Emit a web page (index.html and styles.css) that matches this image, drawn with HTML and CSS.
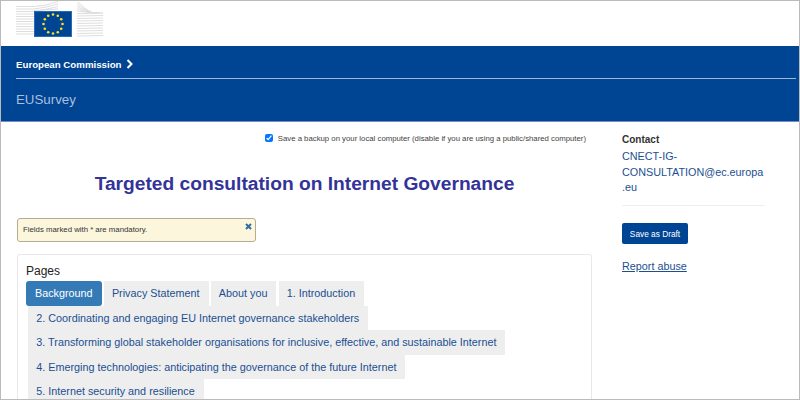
FILE: index.html
```html
<!DOCTYPE html>
<html lang="en">
<head>
    <meta charset="UTF-8">
    <title>EUSurvey</title>
    <link rel="stylesheet" href="styles.css">
</head>
<body>
    <div class="page">
        <div class="logo-bar">
            <svg class="logo" width="87" height="36" viewBox="0 0 87 36">
                <g stroke="#dedede" stroke-width="1" fill="none">
                    <path d="M0 5.500 L18 5.500 Q30 5 42 0.500"/>
                    <path d="M0 8 L18 8 Q30 6.500 42 3"/>
                    <path d="M0 10.500 L18 10.500 Q30 8.500 42 5.500"/>
                    <path d="M18 9.500 L42 8"/>
                    <path d="M0 13 H18"/>
                    <path d="M0 15.500 H18"/>
                    <path d="M0 18 H18"/>
                    <path d="M0 20.500 H18"/>
                    <path d="M0 23 H18"/>
                    <path d="M0 25.500 H18"/>
                    <path d="M0 28 H18"/>
                    <path d="M0 30.500 H18"/>
                    <path d="M0 33 H18"/>
                    <path d="M61 35 L87 34.500"/>
                    <path d="M61 32.500 L87 32"/>
                    <path d="M61 30 L87 29.500"/>
                    <path d="M61 27.500 L87 27"/>
                    <path d="M61 25 L87 24.500"/>
                    <path d="M61 22.500 L87 22"/>
                    <path d="M61 20 L87 19.500"/>
                    <path d="M61 17.500 L87 17"/>
                    <path d="M61 15 L87 14.500"/>
                    <path d="M61 12.500 Q75 13 87 12"/>
                    <path d="M61 10 Q72 12 87 12"/>
                    <path d="M61 7.500 Q70 12 84 12"/>
                    <path d="M61 5 Q68 11 81 12"/>
                    <path d="M61 2.500 Q67 9 78 12"/>
                    <path d="M62 1 Q67 7 75 11"/>
                </g>
                <rect x="18.500" y="10.500" width="37" height="25" fill="#004494" stroke="#2a6ab5"/>
                <g fill="#ffe21a">
                    <circle cx="37" cy="13.500" r="1.300"/>
                    <circle cx="41.800" cy="14.800" r="1.300"/>
                    <circle cx="45.200" cy="18.300" r="1.300"/>
                    <circle cx="46.500" cy="23" r="1.300"/>
                    <circle cx="45.200" cy="27.700" r="1.300"/>
                    <circle cx="41.800" cy="31.200" r="1.300"/>
                    <circle cx="37" cy="32.500" r="1.300"/>
                    <circle cx="32.200" cy="31.200" r="1.300"/>
                    <circle cx="28.800" cy="27.700" r="1.300"/>
                    <circle cx="27.500" cy="23" r="1.300"/>
                    <circle cx="28.800" cy="18.300" r="1.300"/>
                    <circle cx="32.200" cy="14.800" r="1.300"/>
                </g>
            </svg>
        </div>

        <div class="site-header">
            <div class="breadcrumb">
                European Commission
                <svg width="7" height="10" viewBox="0 0 7 10"><path d="M1.500 1 L5.500 5 L1.500 9" fill="none" stroke="#fff" stroke-width="2"/></svg>
            </div>
            <div class="site-name">EUSurvey</div>
        </div>

        <div class="content">
            <div class="main">
                <label class="backup"><input type="checkbox" checked> Save a backup on your local computer (disable if you are using a public/shared computer)</label>
                <h1 class="title">Targeted consultation on Internet Governance</h1>
                <div class="notice">
                    Fields marked with * are mandatory.
                    <svg class="notice-close" width="7" height="7" viewBox="0 0 7 7"><path d="M1 1 L6 6 M6 1 L1 6" fill="none" stroke="#2f6ea5" stroke-width="2"/></svg>
                </div>
                <div class="pages-box">
                    <div class="pages-label">Pages</div>
                    <div class="tabs">
                        <a class="tab active">Background</a>
                        <a class="tab">Privacy Statement</a>
                        <a class="tab">About you</a>
                        <a class="tab">1. Introduction</a>
                        <a class="tab">2. Coordinating and engaging EU Internet governance stakeholders</a>
                        <a class="tab">3. Transforming global stakeholder organisations for inclusive, effective, and sustainable Internet</a>
                        <a class="tab">4. Emerging technologies: anticipating the governance of the future Internet</a>
                        <a class="tab">5. Internet security and resilience</a>
                    </div>
                </div>
            </div>
            <div class="side">
                <div class="side-title">Contact</div>
                <a class="contact-mail">CNECT-IG-CONSULTATION@ec.europa.eu</a>
                <div class="side-rule"></div>
                <button class="draft-btn">Save as Draft</button>
                <a class="report">Report abuse</a>
            </div>
        </div>
    </div>
</body>
</html>
```

FILE: styles.css
```css
html, body {
    margin: 0;
    height: 100%;
}
body {
    font-family: "Liberation Sans", Arial, sans-serif;
    background: #fff;
    overflow: hidden;
}
.page {
    height: 400px;
    box-sizing: border-box;
    border: 1px solid #bbb;
    overflow: hidden;
}
.logo-bar {
    height: 45px;
    box-sizing: border-box;
    padding-left: 15px;
}
.logo {
    display: block;
}
.site-header {
    background: #004494;
    height: 76px;
    box-sizing: border-box;
    padding: 12px 3px 0 15px;
    border-bottom: 1px solid #6f8fc4;
}
.breadcrumb {
    color: #fff;
    font-size: 9.700px;
    font-weight: bold;
    line-height: 13px;
    padding-bottom: 7px;
    border-bottom: 1px solid #9fb6d6;
}
.breadcrumb svg {
    margin-left: 2px;
    vertical-align: -1px;
}
.site-name {
    color: #a9bfdd;
    font-size: 13.300px;
    line-height: 16px;
    margin-top: 13px;
}
.content {
    display: flex;
}
.main {
    width: 575px;
    margin-left: 16px;
    flex: none;
}
.backup {
    display: block;
    text-align: right;
    font-size: 7.780px;
    color: #444;
    line-height: 12px;
    margin-top: 11px;
    margin-right: 6px;
}
.backup input {
    width: 8px;
    height: 8px;
    margin: 0 2.700px 0 0;
    vertical-align: -1px;
}
.title {
    color: #333399;
    font-size: 19.200px;
    line-height: 24px;
    text-align: center;
    margin: 27px 0 0;
}
.notice {
    position: relative;
    width: 239px;
    height: 24px;
    box-sizing: border-box;
    margin-top: 22px;
    background: #fcf6dc;
    border: 1px solid #b5ad93;
    border-radius: 3px;
    font-size: 7.800px;
    line-height: 22px;
    padding-left: 5px;
    color: #333;
}
.notice-close {
    position: absolute;
    top: 4px;
    right: 3px;
}
.pages-box {
    margin-top: 12px;
    width: 575px;
    height: 200px;
    box-sizing: border-box;
    border: 1px solid #e8e8e8;
    border-radius: 3px;
    padding: 10px 8px;
}
.pages-label {
    font-size: 12px;
    line-height: 13px;
    color: #222;
}
.tabs {
    display: flex;
    flex-wrap: wrap;
    align-items: flex-start;
    width: 490px;
    margin-top: 3px;
}
.tab {
    background: #eee;
    color: #1b4f92;
    font-size: 10.800px;
    line-height: 24.500px;
    padding: 0 9px 0 8px;
    margin-left: 2.300px;
}
.tab.active {
    background: #337ab7;
    color: #fff;
    border-radius: 3px;
    margin: 0;
    padding: 0 9px;
}
.side {
    margin-left: 30px;
    width: 143px;
    padding-top: 11px;
}
.side-title {
    font-size: 10px;
    font-weight: bold;
    color: #333;
    line-height: 13px;
}
.contact-mail {
    display: block;
    margin-top: 3px;
    font-size: 10.800px;
    line-height: 15.700px;
    color: #1b4f92;
    overflow-wrap: break-word;
}
.side-rule {
    border-top: 1px solid #eee;
    margin-top: 9px;
}
.draft-btn {
    display: block;
    margin-top: 17px;
    width: 66px;
    height: 21px;
    padding: 0;
    background: #004494;
    color: #fff;
    border: 0;
    border-radius: 2px;
    font-family: inherit;
    font-size: 8.300px;
}
.report {
    display: block;
    margin-top: 16px;
    font-size: 10.800px;
    line-height: 13px;
    color: #1b4f92;
    text-decoration: underline;
}
```
